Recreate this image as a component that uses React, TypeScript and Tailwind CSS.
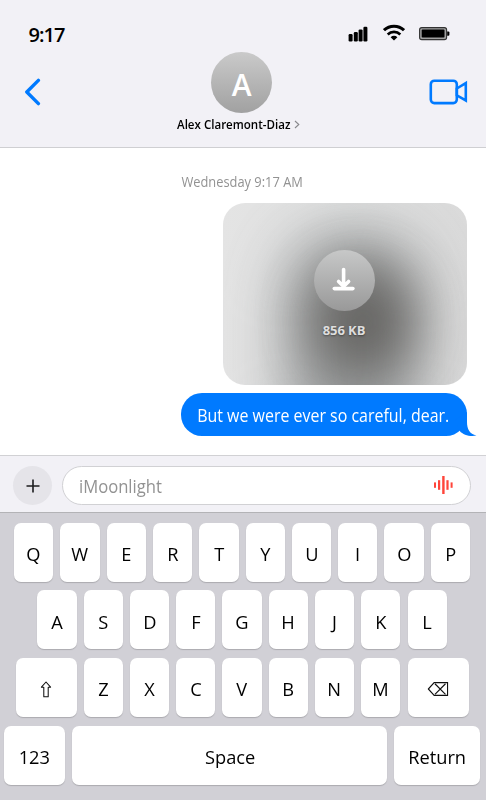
import type { ReactNode } from "react";

const ROW_1 = ["Q", "W", "E", "R", "T", "Y", "U", "I", "O", "P"];
const ROW_2 = ["A", "S", "D", "F", "G", "H", "J", "K", "L"];
const ROW_3 = ["Z", "X", "C", "V", "B", "N", "M"];

function Key({ children, width = "w-[39.2px]" }: { children: ReactNode; width?: string }) {
  return (
    <div
      className={`${width} flex h-[59px] shrink-0 items-center justify-center rounded-[7px] bg-white pt-1 text-[19px] text-black shadow-[0_1px_1px_rgba(0,0,0,0.18)]`}
    >
      <span className="inline-block scale-x-[0.96]">{children}</span>
    </div>
  );
}

function StatusIcons() {
  return (
    <div className="flex items-start">
      <svg width="20" height="16" viewBox="0 0 20 16" className="mt-[2px]">
        <rect x="0.6" y="8" width="4" height="7.4" rx="1.2" />
        <rect x="5.8" y="6" width="4" height="9.4" rx="1.2" />
        <rect x="10.6" y="3.4" width="4" height="12" rx="1.2" />
        <rect x="15.4" y="0.7" width="4" height="14.7" rx="1.2" />
      </svg>
      <svg width="22" height="17" viewBox="0 0 22 17" className="ml-[15px]" fill="none" stroke="#000" strokeWidth="3">
        <path d="M1 6.2a14.4 14.4 0 0 1 20 0" />
        <path d="M4.7 10.4a9.2 9.2 0 0 1 12.6 0" strokeWidth="2.7" />
        <path d="M7.6 13.2a4.9 4.9 0 0 1 6.8 0L11 16.4z" fill="#000" stroke="none" />
      </svg>
      <svg width="31" height="14" viewBox="0 0 31 14" className="ml-[14px] mt-[3px]">
        <rect x="0.6" y="0.6" width="27" height="12" rx="2.2" fill="#a0a0a0" stroke="#333" strokeWidth="1.1" />
        <rect x="2.7" y="2.6" width="22.8" height="8" rx="0.8" />
        <path d="M28.2 4.6h1.2q1 0 1 1v2.2q0 1-1 1h-1.2z" />
      </svg>
    </div>
  );
}

function Header() {
  return (
    <header className="h-[148px] shrink-0 border-b border-[#cfcfd2] bg-[#f2f1f6]">
      <div className="flex h-[52px] justify-between pl-[28.5px] pr-[36px] pt-[24px]">
        <div className="mt-[-2.5px] text-[20px] font-semibold leading-[26px] tracking-[-0.95px]">9:17</div>
        <StatusIcons />
      </div>
      <div className="grid grid-cols-[1fr_auto_1fr] items-start">
        <svg width="18" height="28" viewBox="0 0 18 28" className="ml-[24px] mt-[26px]" fill="none" stroke="#007aff" strokeWidth="3.4" strokeLinecap="round" strokeLinejoin="round">
          <path d="M14.4 2.4L2.8 14l11.6 11.6" />
        </svg>
        <div className="flex flex-col items-center">
          <div className="mr-[2.5px] flex size-[61px] items-center justify-center rounded-full bg-linear-to-b from-[#cacaca] to-[#a1a1a1] pt-[4px] text-[30px] font-semibold text-white">
            A
          </div>
          <div className="mr-[11px] mt-[3px] flex w-[122px] items-center justify-between text-[12px] font-semibold leading-[17px]">
            <span className="origin-left scale-x-[0.963] whitespace-nowrap">Alex Claremont-Diaz</span>
            <svg width="6" height="9" viewBox="0 0 6 9" className="mr-[1px] shrink-0" fill="none" stroke="#88888c" strokeWidth="1.1">
              <path d="M1 1l3.8 3.5L1 8" />
            </svg>
          </div>
        </div>
        <svg width="39" height="26" viewBox="0 0 39 26" className="mr-[18px] mt-[27px] justify-self-end" fill="none" stroke="#007aff" strokeWidth="2.6">
          <rect x="1.8" y="1.7" width="26" height="22.4" rx="3.5" />
          <path d="M27.8 9.5l9-5.4v17.4l-9-5.2z" />
        </svg>
      </div>
    </header>
  );
}

function Attachment() {
  return (
    <div className="relative mt-[10.5px] h-[182.5px] w-[244px] overflow-hidden rounded-[22px] bg-linear-to-r from-[#e4e4e4] via-[#dfe0e0] to-[#dadada]">
      <div className="absolute left-[62px] top-[30px] h-[220px] w-[134px] rounded-[60px] bg-[#818485] opacity-70 blur-[30px]" />
      <div className="absolute left-[88px] top-[62px] h-[112px] w-[104px] rounded-full bg-[#53514e] opacity-75 blur-[27px]" />
      <div className="absolute inset-0 flex flex-col items-center pr-[1px] pt-[47px]">
        <div className="flex size-[61px] items-center justify-center rounded-full bg-linear-to-b from-[#c7c8c8] to-[#999999]">
          <svg width="24" height="24" viewBox="0 0 24 24" className="mt-[-3px]" fill="none" stroke="#fff" strokeWidth="3.6" strokeLinecap="round" strokeLinejoin="round">
            <path d="M11.6 2.5v17M6.6 14.5l5 5 5-5" />
            <path d="M2.3 21.6h18.6" />
          </svg>
        </div>
        <div className="mt-[9px] text-[13px] font-bold leading-[20px] tracking-[-0.05px] text-[#dedede] [text-shadow:0_1px_2px_rgba(0,0,0,0.4)]">
          856 KB
        </div>
      </div>
    </div>
  );
}

function Chat() {
  return (
    <main className="flex h-[307px] shrink-0 flex-col items-end bg-white pr-[19.5px] pt-[24px]">
      <div className="mr-[-19.5px] flex w-[486px] justify-center pr-[2px] text-[14px] leading-[20px] text-[#929292]">
        <span className="scale-x-[0.918]">Wednesday 9:17 AM</span>
      </div>
      <Attachment />
      <div className="relative mt-[7.5px] flex h-[43px] w-[286px] items-center justify-center rounded-[21px] bg-[#007aff] pt-[2px] text-[17.5px] text-white">
        <svg width="30" height="24" viewBox="0 0 30 24" className="absolute bottom-0 right-[-10px]" fill="#007aff">
          <path d="M20 0V10C20 17 22.5 22 29.5 23.6C23 24.8 16 23 12.8 19L8 8Z" />
        </svg>
        <span className="relative scale-x-[0.912] whitespace-nowrap">But we were ever so careful, dear.</span>
      </div>
    </main>
  );
}

function Composer() {
  return (
    <div className="flex h-[57px] shrink-0 items-center gap-[10px] border-t border-[#d1d1d4] bg-[#f2f1f6] pl-[13px] pr-[15px] pt-[3px]">
      <div className="flex size-[39px] shrink-0 items-center justify-center rounded-full bg-[#e5e4e9]">
        <svg width="14" height="14" viewBox="0 0 14 14" stroke="#1c1c1e" strokeWidth="1.6">
          <path d="M7 .5v13M.5 7h13" />
        </svg>
      </div>
      <div className="flex h-[39px] flex-1 items-center justify-between rounded-full border border-[#d1d1d4] bg-white pl-[16px] pr-[17.5px]">
        <span className="origin-left scale-x-[0.95] pt-[2px] text-[17.5px] text-[#929292]">iMoonlight</span>
        <svg width="19" height="18" viewBox="0 0 19 18" className="mt-[-1px]" fill="#ff453a">
          <rect x="0" y="6.4" width="2" height="5.4" />
          <rect x="4" y="4.2" width="2.2" height="9.6" />
          <rect x="8.2" y="0" width="2.4" height="18" />
          <rect x="12.4" y="4.2" width="2.2" height="9.6" />
          <rect x="16.6" y="6.4" width="2" height="5.4" />
        </svg>
      </div>
    </div>
  );
}

function Keyboard() {
  return (
    <div className="flex flex-1 flex-col gap-[8.7px] border-t border-[#b3b3b6] bg-[#d1d0d6] pr-[1.9px] pt-[9.6px]">
      <div className="flex justify-center gap-[7.1px]">
        {ROW_1.map((k) => <Key key={k}>{k}</Key>)}
      </div>
      <div className="flex justify-center gap-[7.1px]">
        {ROW_2.map((k) => <Key key={k}>{k}</Key>)}
      </div>
      <div className="flex justify-center gap-[7.1px]">
        <Key width="w-[61px]">
          <svg width="12" height="17" viewBox="0 0 12 17" fill="none" stroke="#111" strokeWidth="1.1" strokeLinejoin="round">
            <path d="M6 1l4.8 5.2H8.3V15.7H3.7V6.2H1.2z" />
          </svg>
        </Key>
        {ROW_3.map((k) => <Key key={k}>{k}</Key>)}
        <Key width="w-[61px]">
          <svg width="22" height="14" viewBox="0 0 22 14" fill="none" stroke="#111" strokeWidth="1.2">
            <path d="M7 .7h14v12.6H7L.9 7z" />
            <path d="M7.8 1.8l11 10.6M18.8 1.8l-11 10.6" />
          </svg>
        </Key>
      </div>
      <div className="flex justify-center gap-[7.1px]">
        <Key width="w-[61px]">123</Key>
        <Key width="w-[315px]">Space</Key>
        <Key width="w-[85.5px]">Return</Key>
      </div>
    </div>
  );
}

export default function App() {
  return (
    <div className="flex h-[800px] w-[486px] flex-col overflow-hidden bg-white font-['Open_Sans','Noto_Sans',sans-serif] text-black">
      <Header />
      <Chat />
      <Composer />
      <Keyboard />
    </div>
  );
}
